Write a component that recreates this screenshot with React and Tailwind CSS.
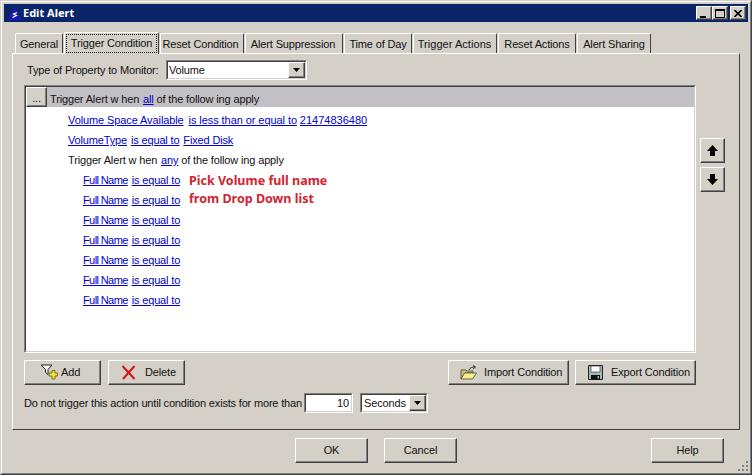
const FONT = "font-['Liberation_Sans',Arial,sans-serif]";

function Btn({ className = "", children }) {
  return (
    <div className={`flex items-center border border-t-white border-l-white border-r-[#404040] border-b-[#404040] bg-[#d4d0c8] shadow-[inset_-1px_-1px_0_#808080] text-[11px] tracking-[-0.15px] text-[#111] ${className}`}>
      {children}
    </div>
  );
}

function L({ children, className = "" }) {
  return <span className={`text-[#0000cc] underline ${className}`}>{children}</span>;
}

function When() {
  return <>w<span className="ml-[3px]">hen</span></>;
}
function Following() {
  return <>follow<span className="ml-[3px]">ing</span></>;
}

const TAB = "flex items-center justify-center rounded-t-[2px] border-t border-l border-r border-t-white border-l-white border-r-[#404040] bg-[#d4d0c8] whitespace-nowrap";

function Tab({ label, active, w, className = "" }) {
  if (active) {
    return (
      <div className={`relative z-10 h-[22px] -mb-px pb-[1px] ${TAB} ${w}`}>
        <span className="w-[91px] h-[19px] flex items-center justify-center border border-dotted border-black">{label}</span>
      </div>
    );
  }
  return <div className={`h-[20px] pt-[1px] ${TAB} ${w} ${className}`}>{label}</div>;
}

function Caret() {
  return (
    <div className="w-[17px] h-[16px] shrink-0 flex items-center justify-center border border-t-white border-l-white border-r-[#404040] border-b-[#404040] bg-[#d4d0c8] shadow-[inset_-1px_-1px_0_#808080]">
      <svg width="7" height="4" viewBox="0 0 7 4"><path d="M0 0h7L3.500 4z" fill="#000" /></svg>
    </div>
  );
}

function Sunken({ className = "", children }) {
  return (
    <div className={`border border-t-[#808080] border-l-[#808080] border-r-white border-b-white bg-white ${className}`}>
      <div className="w-full h-full border border-t-[#404040] border-l-[#404040] border-r-[#d4d0c8] border-b-[#d4d0c8] flex items-center">
        {children}
      </div>
    </div>
  );
}

function Row({ pl, children }) {
  return <div className={`h-[20px] leading-[20px] whitespace-pre text-[#111] ${pl}`}>{children}</div>;
}

function WinBtn({ children, className = "" }) {
  return (
    <div className={`w-[16px] h-[14px] flex items-center justify-center border border-t-white border-l-white border-r-[#404040] border-b-[#404040] bg-[#d4d0c8] shadow-[inset_-1px_-1px_0_#808080] ${className}`}>
      {children}
    </div>
  );
}

export default function App() {
  const names = [0, 1, 2, 3, 4, 5, 6];
  return (
    <div className={`${FONT} relative w-[752px] h-[475px] overflow-hidden bg-[#d4d0c8] border border-t-[#d4d0c8] border-l-[#d4d0c8] border-r-[#404040] border-b-[#404040] text-[11px] tracking-[-0.15px] text-[#111]`}>
      <div className="w-full h-full border border-t-white border-l-white border-r-[#808080] border-b-[#808080] pt-[2px] px-[2px] flex flex-col">
        {/* title bar */}
        <div className="h-[18px] shrink-0 bg-[#0a246a] flex items-center pl-[3px] pr-[2px]">
          <svg width="16" height="16" viewBox="0 0 16 16" className="shrink-0">
            <path d="M8 2 15 15H1z" fill="#1a1ab0" />
            <path d="M5.500 12.500 9.500 10.500 6.500 9 10 7.500" stroke="#fff" strokeWidth="1.200" fill="none" />
          </svg>
          <span className="text-white font-bold text-[11px] tracking-normal font-['Noto_Sans',sans-serif]">Edit Alert</span>
          <div className="ml-auto flex">
            <WinBtn>
              <div className="w-[6px] h-[2px] bg-black mt-[7px] -ml-[2px]" />
            </WinBtn>
            <WinBtn>
              <div className="w-[10px] h-[9px] border border-t-2 border-black" />
            </WinBtn>
            <WinBtn className="ml-[2px]">
              <svg width="8" height="7" viewBox="0 0 8 7"><path d="M0.500 0 7.500 7M7.500 0 0.500 7" stroke="#000" strokeWidth="1.600" /></svg>
            </WinBtn>
          </div>
        </div>

        {/* body */}
        <div className="flex-1 flex flex-col px-[8px] pt-[9px]">
          <div className="h-[22px] flex items-end pl-[3px] gap-[1px] shrink-0">
            <Tab label="General" w="w-[48px]" />
            <Tab label="Trigger Condition" active w="w-[95px]" />
            <Tab label="Reset Condition" w="w-[84px]" className="pr-[3px]" />
            <Tab label="Alert Suppression" w="w-[98px]" className="pr-[2px]" />
            <Tab label="Time of Day" w="w-[68px]" />
            <Tab label="Trigger Actions" w="w-[84px]" className="tracking-[0.05px] pr-[1px]" />
            <Tab label="Reset Actions" w="w-[78px]" />
            <Tab label="Alert Sharing" w="w-[74px]" />
          </div>

          <div className="h-[377px] w-[728px] shrink-0 border border-t-white border-l-white border-r-[#404040] border-b-[#404040] pl-[11px] pt-[6px]">
            <div className="flex items-center h-[20px]">
              <span className="ml-[3px] w-[139px] whitespace-nowrap">Type of Property to Monitor:</span>
              <Sunken className="w-[141px] h-[20px]">
                <span className="pl-[1px] flex-1">Volume</span>
                <Caret />
              </Sunken>
            </div>

            <div className="flex mt-[5px]">
              <div className="w-[672px] h-[268px] border border-t-[#808080] border-l-[#808080] border-r-white border-b-white bg-white">
                <div className="w-full h-full border border-t-[#404040] border-l-[#404040] border-r-[#d4d0c8] border-b-[#d4d0c8]">
                  <div className="h-[20px] bg-[#c2c0c4] flex items-center">
                    <Btn className="w-[21px] h-[20px] justify-center pt-[2px]">...</Btn>
                    <span className="ml-[3px] pt-[5px] whitespace-pre">Trigger Alert <When /> <L className="ml-[1px]">all</L> of the <Following /> apply</span>
                  </div>
                  <div className="pt-[3px]">
                    <Row pl="pl-[42px]"><L className="tracking-[-0.1px]">Volume Space Available</L> <L className="ml-[2px] tracking-[-0.07px]">is less than or equal to</L> <L className="tracking-[0px]">21474836480</L></Row>
                    <Row pl="pl-[42px]"><L>VolumeType</L> <L className="ml-[1px]">is equal to</L> <L className="ml-[1px]">Fixed Disk</L></Row>
                    <Row pl="pl-[42px]">Trigger Alert <When /> <L className="ml-[1px]">any</L> of the <Following /> apply</Row>
                    {names.map((i) => (
                      <div key={i} className="relative">
                        <Row pl="pl-[57px]"><L className="tracking-[-0.6px]">Full Name</L> <L className="ml-[1px]">is equal to</L></Row>
                        {i === 0 && (
                          <div className="absolute left-[163px] top-[2px] font-bold text-[12.5px] tracking-normal leading-[18px] text-[#d2232f] font-['Noto_Sans',sans-serif] whitespace-nowrap">
                            <div>Pick Volume full name</div>
                            <div>from Drop Down list</div>
                          </div>
                        )}
                      </div>
                    ))}
                  </div>
                </div>
              </div>
              <div className="ml-[4px] mt-[53px] flex flex-col gap-[4px]">
                <Btn className="w-[25px] h-[25px] justify-center">
                  <svg width="13" height="13" viewBox="0 0 13 13"><path d="M6.500 1 12 7H9v5H4V7H1z" fill="#000" /></svg>
                </Btn>
                <Btn className="w-[25px] h-[25px] justify-center">
                  <svg width="13" height="13" viewBox="0 0 13 13"><path d="M6.500 12 12 6H9V1H4v5H1z" fill="#000" /></svg>
                </Btn>
              </div>
            </div>

            <div className="flex items-center mt-[7px] w-[672px]">
              <Btn className="w-[77px] h-[25px] pl-[15px] gap-[3px]">
                <svg width="18" height="18" viewBox="0 0 18 18" className="-mt-[1px]">
                  <path d="M1 2h11L8 6.500v5L5.500 9.500v-3z" fill="#fff" stroke="#222" strokeWidth="1" />
                  <path d="M9 10h3V7.500h3V10h2.500v3H15v3h-3v-3H9z" fill="#f6e03a" stroke="#5a5a10" strokeWidth="0.800" />
                </svg>
                <span>Add</span>
              </Btn>
              <Btn className="w-[77px] h-[25px] ml-[7px] pl-[12px] gap-[9px]">
                <svg width="15" height="15" viewBox="0 0 15 15"><path d="M1.500 1 13.500 14M13.500 1 2 14" stroke="#d81414" strokeWidth="2" /></svg>
                <span>Delete</span>
              </Btn>
              <Btn className="w-[121px] h-[25px] ml-auto pl-[11px] gap-[7px]">
                <svg width="17" height="16" viewBox="0 0 17 16">
                  <path d="M1 5h5l1 1h6v2H5L1 14z" fill="#c8c860" stroke="#444" strokeWidth="0.800" />
                  <path d="M1 14 4.500 8H16.500l-4 6z" fill="#f3f08a" stroke="#444" strokeWidth="0.800" />
                  <path d="M9 5c1-2.500 3-3 6-3M13 0.500 15.500 2 13 4" fill="none" stroke="#222" strokeWidth="0.900" />
                </svg>
                <span className="whitespace-nowrap">Import Condition</span>
              </Btn>
              <Btn className="w-[121px] h-[25px] ml-[6px] pl-[12px] gap-[8px]">
                <svg width="15" height="15" viewBox="0 0 15 15">
                  <path d="M0.500 0.500h14v14h-14z" fill="#9fb9b9" stroke="#222" />
                  <path d="M3 1h9v6H3z" fill="#fff" stroke="#222" strokeWidth="0.600" />
                  <path d="M3 10h9v4.500H3z" fill="#111" />
                  <path d="M9.500 11h1.500v2.500H9.500z" fill="#9fb9b9" />
                </svg>
                <span className="whitespace-nowrap">Export Condition</span>
              </Btn>
            </div>

            <div className="flex items-center mt-[8px] h-[20px]">
              <span className="w-[280px] whitespace-nowrap tracking-[-0.18px]">Do not trigger this action until condition exists for more than</span>
              <Sunken className="w-[49px] h-[20px]">
                <span className="w-full text-right pr-[2px]">10</span>
              </Sunken>
              <Sunken className="w-[68px] h-[20px] ml-[7px]">
                <span className="pl-[2px] flex-1">Seconds</span>
                <Caret />
              </Sunken>
            </div>
          </div>

          <div className="flex items-center mt-[8px] h-[25px] w-[728px]">
            <Btn className="w-[73px] h-[25px] ml-[283px] justify-center">OK</Btn>
            <Btn className="w-[73px] h-[25px] ml-[16px] justify-center">Cancel</Btn>
            <Btn className="w-[73px] h-[25px] ml-auto mr-[16px] justify-center">Help</Btn>
          </div>
        </div>
      </div>

      {/* resize grip */}
      <svg width="12" height="12" viewBox="0 0 12 12" className="absolute right-[2px] bottom-[2px]">
        <g fill="#808080">
          <rect x="9" y="1" width="2" height="2" />
          <rect x="5" y="5" width="2" height="2" />
          <rect x="9" y="5" width="2" height="2" />
          <rect x="1" y="9" width="2" height="2" />
          <rect x="5" y="9" width="2" height="2" />
          <rect x="9" y="9" width="2" height="2" />
        </g>
      </svg>
    </div>
  );
}
